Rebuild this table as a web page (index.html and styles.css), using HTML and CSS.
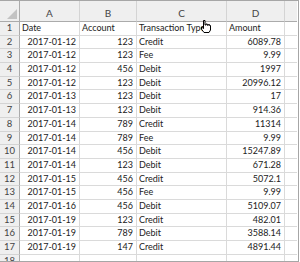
FILE: index.html
```html
<!DOCTYPE html>
<html>
<head>
<meta charset="utf-8">
<link rel="stylesheet" href="styles.css">
</head>
<body>
<div class="sheet">
  <div class="grid">
    <div class="corner"><svg class="tri" width="10" height="10" viewBox="0 0 10 10"><polygon points="10,0 10,10 0,10" fill="#c3c3c3"/></svg></div>
    <div class="h">A</div><div class="h">B</div><div class="h">C</div><div class="h">D</div><div class="h e"></div>

    <div class="n">1</div><div class="c">Date</div><div class="c">Account</div><div class="c">Transaction Type</div><div class="c">Amount</div><div class="c e"></div>
    <div class="n">2</div><div class="c r">2017-01-12</div><div class="c r">123</div><div class="c">Credit</div><div class="c r">6089.78</div><div class="c e"></div>
    <div class="n">3</div><div class="c r">2017-01-12</div><div class="c r">123</div><div class="c">Fee</div><div class="c r">9.99</div><div class="c e"></div>
    <div class="n">4</div><div class="c r">2017-01-12</div><div class="c r">456</div><div class="c">Debit</div><div class="c r">1997</div><div class="c e"></div>
    <div class="n">5</div><div class="c r">2017-01-12</div><div class="c r">123</div><div class="c">Debit</div><div class="c r">20996.12</div><div class="c e"></div>
    <div class="n">6</div><div class="c r">2017-01-13</div><div class="c r">123</div><div class="c">Debit</div><div class="c r">17</div><div class="c e"></div>
    <div class="n">7</div><div class="c r">2017-01-13</div><div class="c r">123</div><div class="c">Debit</div><div class="c r">914.36</div><div class="c e"></div>
    <div class="n">8</div><div class="c r">2017-01-14</div><div class="c r">789</div><div class="c">Credit</div><div class="c r">11314</div><div class="c e"></div>
    <div class="n">9</div><div class="c r">2017-01-14</div><div class="c r">789</div><div class="c">Fee</div><div class="c r">9.99</div><div class="c e"></div>
    <div class="n">10</div><div class="c r">2017-01-14</div><div class="c r">456</div><div class="c">Debit</div><div class="c r">15247.89</div><div class="c e"></div>
    <div class="n">11</div><div class="c r">2017-01-14</div><div class="c r">123</div><div class="c">Debit</div><div class="c r">671.28</div><div class="c e"></div>
    <div class="n">12</div><div class="c r">2017-01-15</div><div class="c r">456</div><div class="c">Credit</div><div class="c r">5072.1</div><div class="c e"></div>
    <div class="n">13</div><div class="c r">2017-01-15</div><div class="c r">456</div><div class="c">Fee</div><div class="c r">9.99</div><div class="c e"></div>
    <div class="n">14</div><div class="c r">2017-01-16</div><div class="c r">456</div><div class="c">Debit</div><div class="c r">5109.07</div><div class="c e"></div>
    <div class="n">15</div><div class="c r">2017-01-19</div><div class="c r">123</div><div class="c">Credit</div><div class="c r">482.01</div><div class="c e"></div>
    <div class="n">16</div><div class="c r">2017-01-19</div><div class="c r">789</div><div class="c">Debit</div><div class="c r">3588.14</div><div class="c e"></div>
    <div class="n">17</div><div class="c r">2017-01-19</div><div class="c r">147</div><div class="c">Credit</div><div class="c r">4891.44</div><div class="c e"></div>
    <div class="n last">18</div><div class="c last"></div><div class="c last"></div><div class="c last"></div><div class="c last"></div><div class="c e last"></div>
  </div>
  <svg class="cursor" width="11" height="13" viewBox="0 0 11 13">
    <path d="M3.5 0.5h1.5v4.5h1v-1h1.3v1.3h1v-0.8h1.2v1h1v4.5l-1.5 2.5h-5l-2.5-3.3v-2.2h1.5v1.5h0.5z" fill="#fff" stroke="#000" stroke-width="1"/>
  </svg>
</div>
</body>
</html>
```
FILE: styles.css
```css
html, body {
  margin: 0;
  padding: 0;
  background: #ffffff;
}
.sheet {
  position: relative;
  width: 299px;
  height: 262px;
  box-sizing: border-box;
  border-top: 1px solid #a6a6a6;
  border-right: 1px solid #a6a6a6;
  border-bottom: 1px solid #a6a6a6;
  overflow: hidden;
  font-family: Lato, "Open Sans", sans-serif;
}
.grid {
  display: grid;
  grid-template-columns: 20px 60px 57px 90px 58px 12px;
  grid-template-rows: 21px repeat(17, 13.7px) 1fr;
  height: 100%;
}
.grid > div {
  box-sizing: border-box;
  overflow: hidden;
  white-space: nowrap;
}
.corner {
  background: #efefef;
  border-right: 1px solid #ababab;
  border-bottom: 1px solid #ababab;
  position: relative;
}
.tri {
  position: absolute;
  right: 2px;
  bottom: 2px;
}
.h {
  background: #efefef;
  border-right: 1px solid #d4d4d4;
  border-bottom: 1px solid #ababab;
  color: #444444;
  font-size: 10px;
  text-align: center;
  line-height: 24px;
}
.n {
  background: #efefef;
  border-right: 1px solid #ababab;
  border-bottom: 1px solid #d4d4d4;
  color: #444444;
  font-size: 9.5px;
  text-align: center;
  line-height: 12.7px;
}
.c {
  border-right: 1px solid #dadada;
  border-bottom: 1px solid #dadada;
  color: #222222;
  font-size: 9px;
  line-height: 11.7px;
  padding: 0 2px 0 2px;
}
.r {
  text-align: right;
  padding-right: 3px;
}
.e {
  border-right: none;
}
.last {
  border-bottom: none;
}
.cursor {
  position: absolute;
  left: 200px;
  top: 19px;
}
```
